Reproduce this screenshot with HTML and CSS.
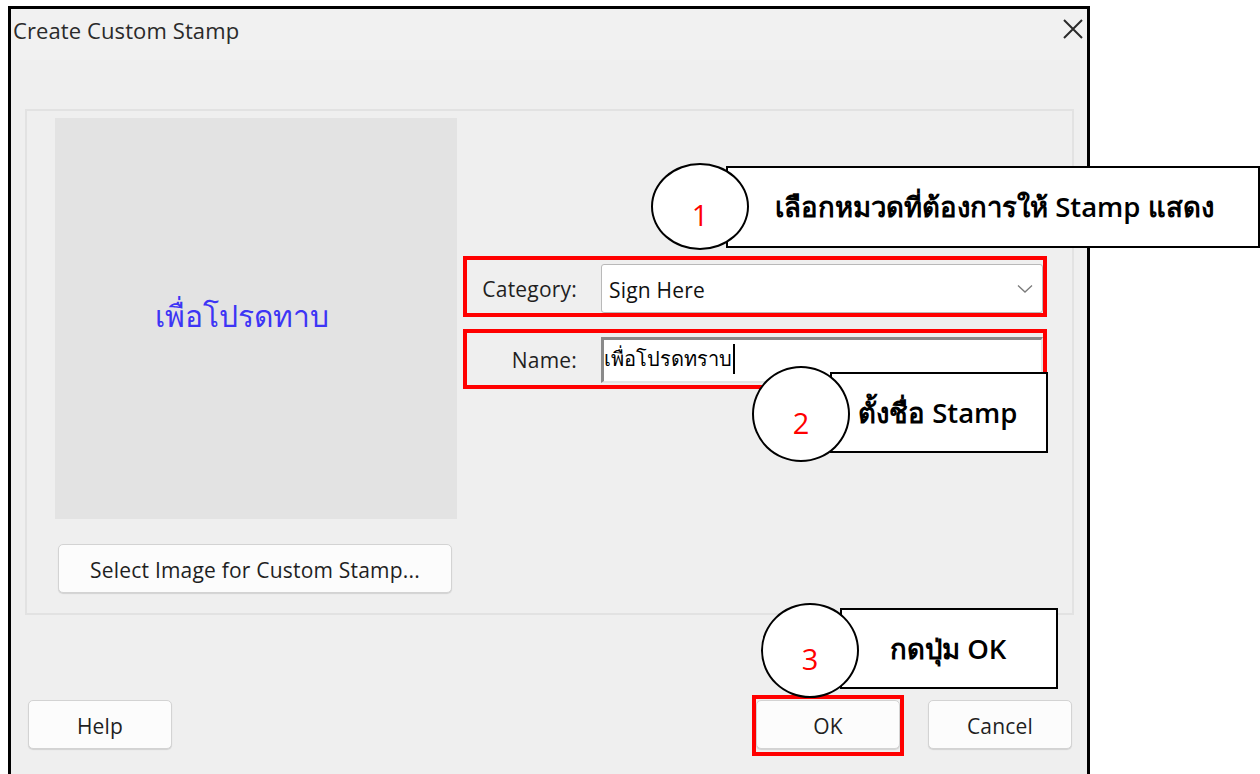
FILE: index.html
```html
<!DOCTYPE html>
<html lang="th">
<head>
<meta charset="utf-8">
<title>Create Custom Stamp</title>
<link rel="stylesheet" href="styles.css">
</head>
<body>
<div class="page">
  <div class="dialog">
    <div class="titlebar">
      <span class="title">Create Custom Stamp</span>
      <svg class="close" width="24" height="24" viewBox="0 0 24 24">
        <path d="M3 3 L21 21 M21 3 L3 21" stroke="#2b2b2b" stroke-width="2" fill="none"/>
      </svg>
    </div>
    <div class="body">
      <div class="group">
        <div class="left-col">
          <div class="preview"><span class="preview-text">เพื่อโปรดทาบ</span></div>
          <button class="btn btn-select">Select Image for Custom Stamp...</button>
        </div>
        <div class="right-col">
          <div class="field hl">
            <label class="field-label">Category:</label>
            <div class="select">
              <span>Sign Here</span>
              <svg class="chev" width="16" height="10" viewBox="0 0 16 10">
                <path d="M1 1.5 L8 8 L15 1.5" stroke="#7a7a7a" stroke-width="1.3" fill="none"/>
              </svg>
            </div>
          </div>
          <div class="field hl field-name">
            <label class="field-label">Name:</label>
            <div class="input"><span class="input-text">เพื่อโปรดทราบ</span><span class="caret"></span></div>
          </div>
        </div>
      </div>
      <div class="footer">
        <button class="btn btn-foot">Help</button>
        <div class="footer-right">
          <div class="hl ok-wrap"><button class="btn btn-foot">OK</button></div>
          <button class="btn btn-foot">Cancel</button>
        </div>
      </div>
    </div>
  </div>

  <!-- step callouts -->
  <div class="callout box1">เลือกหมวดที่ต้องการให้ Stamp แสดง</div>
  <div class="step step1">1</div>
  <div class="callout box2">ตั้งชื่อ Stamp</div>
  <div class="step step2">2</div>
  <div class="callout box3">กดปุ่ม OK</div>
  <div class="step step3">3</div>
</div>
</body>
</html>
```
FILE: styles.css
```css
* { box-sizing: border-box; }

html, body {
  margin: 0;
  padding: 0;
  background: #ffffff;
}

.page {
  position: relative;
  width: 1260px;
  height: 774px;
  overflow: hidden;
  font-family: "Open Sans", "Noto Sans", sans-serif;
  color: #1e1e1e;
}

/* window frame */
.dialog {
  margin: 6px 0 0 8px;
  width: 1082px;
  height: 800px;
  border: 3px solid #000;
  border-bottom: none;
  background: #efefef;
  display: flex;
  flex-direction: column;
}

.titlebar {
  height: 51px;
  flex: none;
  background: #f1f1f1;
  display: flex;
  align-items: flex-start;
  justify-content: space-between;
  padding: 6px 2px 0 2px;
}

.title {
  font-size: 22px;
  color: #2a2a2a;
  letter-spacing: 0.1px;
}

.close {
  margin-top: 2px;
  margin-right: 0;
}

.body {
  padding: 49px 13px 0 14px;
}

/* group box */
.group {
  height: 506px;
  border: 2px solid #e2e2e2;
  display: flex;
  padding: 7px 0 0 28px;
}

.left-col {
  width: 402px;
  flex: none;
  display: flex;
  flex-direction: column;
}

.preview {
  height: 401px;
  background: #e3e3e3;
  display: flex;
  align-items: center;
  justify-content: center;
}

.preview-text {
  color: #3d35f5;
  font-size: 30px;
  margin-top: -5px;
  margin-right: 28px;
}

.btn {
  font-family: "Open Sans", "Noto Sans", sans-serif;
  background: #fcfcfc;
  border: 1px solid #d3d3d3;
  border-radius: 5px;
  box-shadow: 0 1px 1px rgba(0,0,0,0.12);
  color: #1f1f1f;
  padding: 3px 0 0 0;
  letter-spacing: 0.2px;
}

.btn-select {
  margin: 25px 0 0 3px;
  width: 394px;
  height: 49px;
  font-size: 21px;
}

.right-col {
  margin-left: 6px;
  padding-top: 138px;
  display: flex;
  flex-direction: column;
  gap: 12px;
}

/* red highlight frame */
.hl {
  border: 4px solid #ff0000;
}

.field {
  width: 584px;
  height: 61px;
  display: flex;
  align-items: center;
  padding-top: 4px;
}

.field-name {
  height: 60px;
  padding-top: 2px;
}

.field-label {
  width: 110px;
  text-align: right;
  font-size: 21px;
  letter-spacing: 0.2px;
  color: #1f1f1f;
}

.select {
  margin-left: 24px;
  width: 442px;
  height: 49px;
  background: #fff;
  border: 1px solid #b9b9b9;
  border-radius: 3px;
  display: flex;
  align-items: center;
  justify-content: space-between;
  padding: 2px 9px 0 7px;
  font-size: 21px;
  letter-spacing: 0.2px;
  color: #111;
}

.chev { margin-top: -1px; }

.input {
  margin-left: 24px;
  width: 442px;
  height: 46px;
  background: #fff;
  border-top: 3px solid #8a8a8a;
  border-left: 3px solid #8a8a8a;
  border-right: 2px solid #e4e4e4;
  border-bottom: 2px solid #e4e4e4;
  display: flex;
  align-items: center;
  padding-left: 0;
  padding-bottom: 4px;
}

.input-text {
  font-size: 20px;
  color: #000;
}

.caret {
  width: 2px;
  height: 30px;
  background: #000;
  margin-left: 1px;
}

/* bottom buttons */
.footer {
  display: flex;
  justify-content: space-between;
  align-items: flex-start;
  padding: 85px 2px 0 3px;
}

.footer-right {
  display: flex;
  align-items: flex-start;
  gap: 24px;
}

.ok-wrap {
  margin-top: -5px;
  padding: 1px 0 3px 0;
}

.btn-foot {
  width: 144px;
  height: 49px;
  font-size: 21px;
}

/* numbered step annotations */
.callout {
  position: absolute;
  background: #fff;
  border: 2px solid #000;
  color: #000;
  font-weight: 600;
  font-size: 27.5px;
  display: flex;
  align-items: center;
}

.box1 { left: 726px; top: 166px; width: 534px; height: 82px; padding-left: 47px; }
.box2 { left: 830px; top: 372px; width: 218px; height: 81px; padding-left: 26px; }
.box3 { left: 840px; top: 608px; width: 218px; height: 81px; padding-left: 48px; }

.step {
  position: absolute;
  background: #fff;
  border: 2px solid #000;
  border-radius: 50%;
  color: #ff0000;
  font-size: 29px;
  display: flex;
  align-items: center;
  justify-content: center;
  padding-top: 16px;
}

.step1 { left: 651px; top: 163px; width: 98px; height: 87px; }
.step2 { left: 752px; top: 366px; width: 98px; height: 96px; }
.step3 { left: 761px; top: 603px; width: 98px; height: 95px; }
```
